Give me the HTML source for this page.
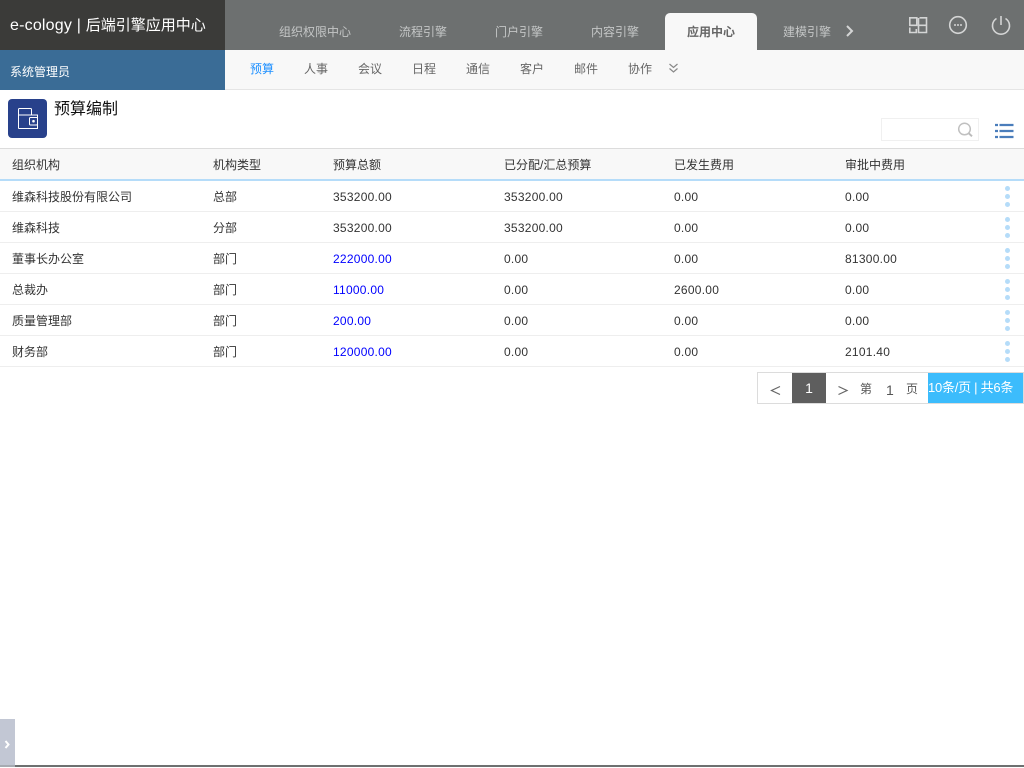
<!DOCTYPE html>
<html lang="zh-CN"><head><meta charset="utf-8"><title>预算编制</title>
<style>
html,body{margin:0;padding:0;background:#fff;}
body{width:1024px;height:768px;position:relative;overflow:hidden;font-family:"Liberation Sans","Noto Sans CJK SC",sans-serif;font-size:12px;color:#333;}
.a{position:absolute;white-space:nowrap;line-height:16px;}
.t{color:#c4c6c6;top:24px;}
.n{color:#666;top:61px;}
.h{color:#333;top:157px;}
.b{color:#0000ff;}
.m{letter-spacing:.25px;}
.line{position:absolute;left:0;width:1024px;height:1px;background:#eee;}
.dots{position:absolute;left:1005px;width:5px;}
.dots i{display:block;width:5px;height:5px;border-radius:50%;background:#b5dcf9;margin-bottom:3px;}
</style></head><body>
<div class="a" style="left:0;top:0;width:1024px;height:50px;background:#6d7070"></div>
<div class="a" style="left:0;top:0;width:225px;height:50px;background:#3b3b39"></div>
<div class="a" style="left:10px;top:16px;color:#fff;font-size:15px;line-height:20px"><span style="font-size:16px;letter-spacing:.2px">e-cology | </span>后端引擎应用中心</div>
<div class="a" style="left:0;top:50px;width:225px;height:40px;background:#3a6c96"></div>
<div class="a" style="left:10px;top:64px;color:#fff">系统管理员</div>
<div class="a" style="left:225px;top:50px;width:799px;height:39px;background:#f8f8f8"></div>
<div class="a" style="left:225px;top:89px;width:799px;height:1px;background:#e5e5e5"></div>
<div class="a t" style="left:279px">组织权限中心</div>
<div class="a t" style="left:399px">流程引擎</div>
<div class="a t" style="left:495px">门户引擎</div>
<div class="a t" style="left:591px">内容引擎</div>
<div class="a" style="left:665px;top:13px;width:92px;height:37px;background:#f8f8f8;border-radius:5px 5px 0 0"></div>
<div class="a" style="left:687px;top:24px;color:#666;font-weight:bold">应用中心</div>
<div class="a t" style="left:783px">建模引擎</div>
<svg class="a" style="left:0;top:0" width="1024" height="768" fill="none">
<path d="M847 26l5 5-5 5" stroke="#d4d5d5" stroke-width="2"/>
<g stroke="#d4d5d5" stroke-width="1.600">
<path d="M909.800 17.800h7v7.500h-7zM919.500 17.800h7v7.500h-7.500M918.500 18v14.500h8v-7M909.800 27.500v5h6.500v-3.500"/>
<circle cx="958" cy="25" r="8.300"/>
<path d="M1001 16v9"/><path d="M996.500 18.500a8.500 8.500 0 1 0 9 0"/>
</g>
<g fill="#d4d5d5"><circle cx="955" cy="25" r="1"/><circle cx="958" cy="25" r="1"/><circle cx="961" cy="25" r="1"/></g>
<path d="M669.500 64l4 3.500 4-3.500M669.500 68.500l4 3.500 4-3.500" stroke="#888" stroke-width="1.200"/>
<rect x="8" y="99" width="39" height="39" rx="4" fill="#28418b"/>
<g stroke="#fff" stroke-width="1"><path d="M18.500 128.500v-19a1 1 0 0 1 1-1h11a1 1 0 0 1 1 1v5.500"/><path d="M18.500 115h19v13.500h-19"/><rect x="29.500" y="117.500" width="8" height="7.500" rx="1" fill="#28418b"/></g><circle cx="33.500" cy="121.200" r="1.300" fill="#fff"/>
<rect x="881.500" y="118.500" width="97" height="22" stroke="#f0f0f0"/>
<circle cx="964.500" cy="129" r="5.800" stroke="#c0c0c0" stroke-width="1.500"/><path d="M968.800 133.300l3.200 3" stroke="#bbb" stroke-width="2"/>
<path d="M995 125h3M999.500 125h14M995 131h3M999.500 131h14M995 137h3M999.500 137h14" stroke="#4a7dbb" stroke-width="2.300"/>
<path d="M780 386.500l-8.500 4 8.500 4M838.500 386.500l8.500 4-8.500 4" stroke="#666" stroke-width="1.200"/>
</svg>
<div class="a n" style="left:250px;color:#1e90ff">预算</div>
<div class="a n" style="left:304px">人事</div>
<div class="a n" style="left:358px">会议</div>
<div class="a n" style="left:412px">日程</div>
<div class="a n" style="left:466px">通信</div>
<div class="a n" style="left:520px">客户</div>
<div class="a n" style="left:574px">邮件</div>
<div class="a n" style="left:628px">协作</div>
<div class="a" style="left:54px;top:100px;color:#111;font-size:16px;line-height:20px">预算编制</div>
<div class="a" style="left:0;top:148px;width:1024px;height:32px;background:#f8f8f8"></div>
<div class="a" style="left:0;top:148px;width:1024px;height:1px;background:#dcdcdc"></div>
<div class="a" style="left:0;top:179px;width:1024px;height:2px;background:#b5dcf9"></div>
<div class="a h" style="left:12px">组织机构</div>
<div class="a h" style="left:213px">机构类型</div>
<div class="a h" style="left:333px">预算总额</div>
<div class="a h" style="left:504px">已分配/汇总预算</div>
<div class="a h" style="left:674px">已发生费用</div>
<div class="a h" style="left:845px">审批中费用</div>

<div class="a" style="left:12px;top:189px">维森科技股份有限公司</div><div class="a" style="left:213px;top:189px">总部</div><div class="a m" style="left:333px;top:189px">353200.00</div><div class="a m" style="left:504px;top:189px">353200.00</div><div class="a m" style="left:674px;top:189px">0.00</div><div class="a m" style="left:845px;top:189px">0.00</div>
<div class="dots" style="top:186px"><i></i><i></i><i></i></div><div class="line" style="top:211px"></div>

<div class="a" style="left:12px;top:220px">维森科技</div><div class="a" style="left:213px;top:220px">分部</div><div class="a m" style="left:333px;top:220px">353200.00</div><div class="a m" style="left:504px;top:220px">353200.00</div><div class="a m" style="left:674px;top:220px">0.00</div><div class="a m" style="left:845px;top:220px">0.00</div>
<div class="dots" style="top:217px"><i></i><i></i><i></i></div><div class="line" style="top:242px"></div>

<div class="a" style="left:12px;top:251px">董事长办公室</div><div class="a" style="left:213px;top:251px">部门</div><div class="a m b" style="left:333px;top:251px">222000.00</div><div class="a m" style="left:504px;top:251px">0.00</div><div class="a m" style="left:674px;top:251px">0.00</div><div class="a m" style="left:845px;top:251px">81300.00</div>
<div class="dots" style="top:248px"><i></i><i></i><i></i></div><div class="line" style="top:273px"></div>

<div class="a" style="left:12px;top:282px">总裁办</div><div class="a" style="left:213px;top:282px">部门</div><div class="a m b" style="left:333px;top:282px">11000.00</div><div class="a m" style="left:504px;top:282px">0.00</div><div class="a m" style="left:674px;top:282px">2600.00</div><div class="a m" style="left:845px;top:282px">0.00</div>
<div class="dots" style="top:279px"><i></i><i></i><i></i></div><div class="line" style="top:304px"></div>

<div class="a" style="left:12px;top:313px">质量管理部</div><div class="a" style="left:213px;top:313px">部门</div><div class="a m b" style="left:333px;top:313px">200.00</div><div class="a m" style="left:504px;top:313px">0.00</div><div class="a m" style="left:674px;top:313px">0.00</div><div class="a m" style="left:845px;top:313px">0.00</div>
<div class="dots" style="top:310px"><i></i><i></i><i></i></div><div class="line" style="top:335px"></div>

<div class="a" style="left:12px;top:344px">财务部</div><div class="a" style="left:213px;top:344px">部门</div><div class="a m b" style="left:333px;top:344px">120000.00</div><div class="a m" style="left:504px;top:344px">0.00</div><div class="a m" style="left:674px;top:344px">0.00</div><div class="a m" style="left:845px;top:344px">2101.40</div>
<div class="dots" style="top:341px"><i></i><i></i><i></i></div><div class="line" style="top:366px"></div>

<div class="a" style="left:757px;top:372px;width:265px;height:30px;border:1px solid #dcdcdc"></div>
<div class="a" style="left:792px;top:373px;width:34px;height:30px;background:#5e5e5e;color:#fff;text-align:center;line-height:30px;font-size:14px">1</div>
<div class="a" style="left:860px;top:381px;color:#555">第</div>
<div class="a" style="left:886px;top:382px;color:#555;font-size:14px">1</div>
<div class="a" style="left:906px;top:381px;color:#555">页</div>
<div class="a" style="left:928px;top:373px;width:95px;height:30px;background:#3cbcfc;color:#fff;line-height:30px;font-size:13px;letter-spacing:-.25px">10条/页 | 共6条</div>

<div class="a" style="left:0;top:719px;width:15px;height:46px;background:#c2c7d4"></div>
<svg class="a" style="left:0;top:719px" width="15" height="46" fill="none"><path d="M5.500 22l3 3.500-3 3.500" stroke="#fff" stroke-width="2"/></svg>
<div class="a" style="left:0;top:765px;width:1024px;height:2px;background:#6d7070"></div>
<div class="a" style="left:0;top:765px;width:15px;height:2px;background:#a6abb2"></div>
</body></html>
